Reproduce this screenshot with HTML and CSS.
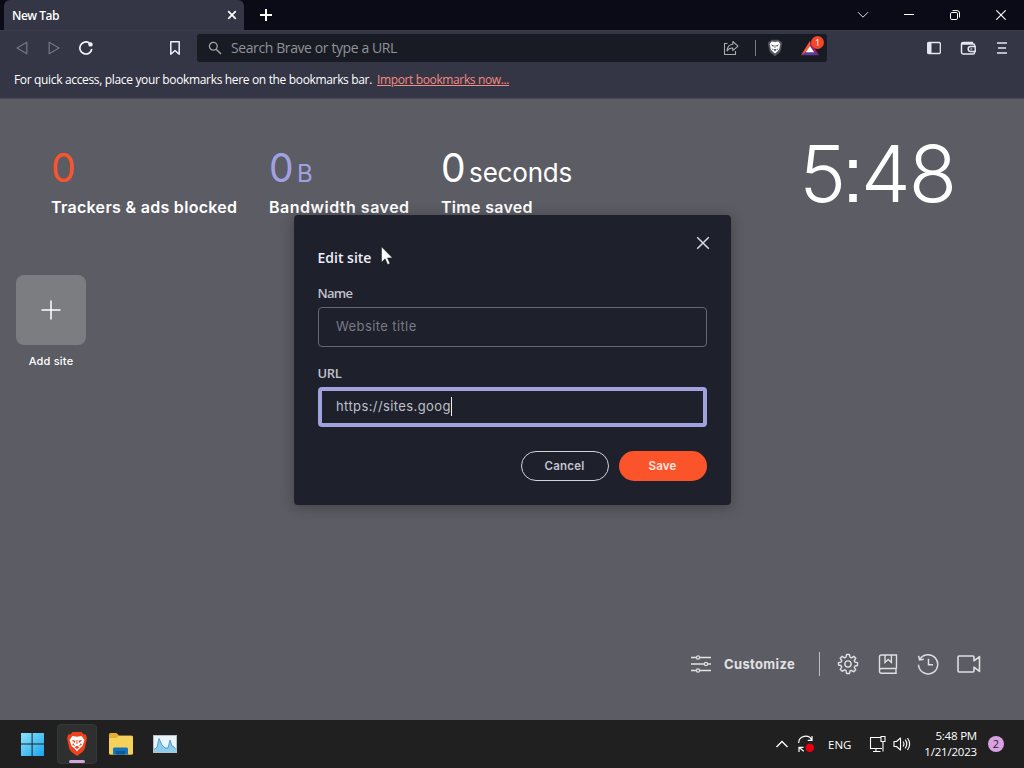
FILE: index.html
```
<!DOCTYPE html>
<html lang="en">
<head>
    <meta charset="UTF-8">
    <title>New Tab</title>
    <link rel="stylesheet" href="styles.css">
</head>
<body>
    <div class="titlebar">
        <div class="tab">
            <span>New Tab</span>
            <svg width="10" height="10" viewBox="0 0 10 10"><path d="M1.2 1.2l7.6 7.6M8.8 1.2L1.2 8.8" stroke="#fff" stroke-width="1.7"/></svg>
        </div>
        <svg class="new-tab" width="12" height="12" viewBox="0 0 12 12"><path d="M6 0v12M0 6h12" stroke="#fff" stroke-width="2"/></svg>
        <div class="window-buttons">
            <span><svg width="12" height="8" viewBox="0 0 12 8"><path d="M1 1.2l5 5 5-5" stroke="#ddd"/></svg></span>
            <span><svg width="10" height="10" viewBox="0 0 10 10"><path d="M0 4.5h10" stroke="#fff"/></svg></span>
            <span><svg width="10" height="10" viewBox="0 0 10 10"><rect x=".5" y="2.5" width="7" height="7" rx="1.3" stroke="#fff"/><path d="M2.5.6H7Q9.5.6 9.5 3v4.5" stroke="#fff"/></svg></span>
            <span><svg width="10" height="10" viewBox="0 0 10 10"><path d="M.3.3l9.4 9.4M9.7.3L.3 9.7" stroke="#fff" stroke-width="1.1"/></svg></span>
        </div>
    </div>

    <div class="toolbar">
        <div class="nav-icons">
            <svg width="16" height="16" viewBox="0 0 16 16"><path d="M12.8 2.2v11.6L3 8z" stroke="#73747f" stroke-width="1.3" stroke-linejoin="round"/></svg>
            <svg width="16" height="16" viewBox="0 0 16 16"><path d="M3.2 2.2v11.6L13 8z" stroke="#73747f" stroke-width="1.3" stroke-linejoin="round"/></svg>
            <svg width="16" height="16" viewBox="0 0 16 16"><path d="M11.5 3.2A6 6 0 1 0 13.8 9" stroke="#f3f3fa" stroke-width="1.7"/><circle cx="12.5" cy="4.4" r="2.2" fill="#f3f3fa"/></svg>
        </div>
        <svg class="bookmark" width="16" height="16" viewBox="0 0 16 16"><path d="M3.8 1.8h8.4v12.4L8 10.5l-4.2 3.7z" stroke="#eeeef5" stroke-width="1.5" stroke-linejoin="round"/></svg>
        <div class="address">
            <svg width="14" height="14" viewBox="0 0 14 14"><circle cx="5.3" cy="5.3" r="3.9" stroke="#a2a4ab" stroke-width="1.3"/><path d="M8.2 8.2l4.8 4.8" stroke="#a2a4ab" stroke-width="1.5"/></svg>
            <span class="address-text">Search Brave or type a URL</span>
            <svg class="share" width="16" height="16" viewBox="0 0 16 16"><path d="M4.5 3.5h-3v11h11v-3.5" stroke="#a9abb1" stroke-width="1.1"/><path d="M9.8 1.5l5.2 4.6-5.2 4.5V8C7.2 7.9 5.4 8.800 4 10.900c.3-4 2.500-6.400 5.800-6.700z" stroke="#a9abb1" stroke-width="1.1" stroke-linejoin="round"/></svg>
            <i class="address-sep"></i>
            <svg class="shield" width="16" height="18" viewBox="0 0 16 18"><path d="M4.4.8h7.2l1.2 1.5 1.600.2.600 2.600-1.600 7.300Q13 13.500 8 17.200 3 13.500 2.600 12.400L1 5.100l.6-2.600 1.600-.2z" fill="#555760"/><path d="M4.8 2.400l3.200.5 3.200-.5L13.200 5l-1 5.400L9.800 13 8 14.600 6.200 13l-2.400-2.600-1-5.400z" fill="#fff"/><path d="M3.800 5.400l3 .9-.6 1.700zM12.200 5.400l-3 .9.6 1.700zM6.400 10.700L8 9.700l1.600 1L8 12.200zM7.600 6h.8v3h-.8zM4.500 9l2 1.500-.8.500zM11.500 9l-2 1.500.8.500z" fill="#50525c"/></svg>
            <div class="rewards">
                <svg width="18" height="16" viewBox="0 0 18 16"><path d="M9 .8L0 15.200l4.800-2.400L9 6z" fill="#ff5537"/><path d="M9 .8l9 14.400-4.800-2.400L9 6z" fill="#9e1f63"/><path d="M0 15.200h18l-4.600-3.200H4.600z" fill="#5b3c9c"/><path d="M9 6l4.200 6.300H4.800z" fill="#fff"/></svg>
                <b>1</b>
            </div>
        </div>
        <div class="right-icons">
            <svg width="16" height="16" viewBox="0 0 16 16"><rect x="1.7" y="2.5" width="12.6" height="11" rx="1" stroke="#e6e6ee" stroke-width="1.3"/><path d="M1.5 2.500h4v11h-4z" fill="#e6e6ee"/></svg>
            <svg width="16" height="16" viewBox="0 0 16 16"><path d="M14.500 6V5q0-1-1-1h-12m0-.3v8.600Q1.500 14 3 14h10q1.500 0 1.500-1.600v-.7M1.500 4q0-1.500 1.500-1.500h9.300V4" stroke="#e6e6ee" stroke-width="1.5"/><path d="M15.200 6.600v4.800h-4.600a2.400 2.400 0 0 1 0-4.800z" stroke="#e6e6ee" stroke-width="1.5"/><path d="M10.500 9h1.700" stroke="#e6e6ee" stroke-width="1.2"/></svg>
            <svg width="16" height="16" viewBox="0 0 16 16"><path d="M3 3h10M4 8h8M3 13h10" stroke="#e6e6ee" stroke-width="1.6"/></svg>
        </div>
    </div>

    <div class="bookmarks-bar">
        <span class="hint">For quick access, place your bookmarks here on the bookmarks bar.</span>
        <a class="import">Import bookmarks now...</a>
    </div>

    <main class="page">
        <div class="top">
            <div class="stat stat-ads">
                <div class="value">0</div>
                <div class="label">Trackers &amp; ads blocked</div>
            </div>
            <div class="stat stat-data">
                <div class="value">0<small>B</small></div>
                <div class="label">Bandwidth saved</div>
            </div>
            <div class="stat stat-time">
                <div class="value">0<small>seconds</small></div>
                <div class="label">Time saved</div>
            </div>
            <div class="clock">5<span class="colon">:</span>48</div>
        </div>

        <div class="add-site">
            <div class="tile"><svg width="20" height="20" viewBox="0 0 20 20"><path d="M10 .5v19M.5 10h19" stroke="#fff" stroke-width="1.5"/></svg></div>
            <span>Add site</span>
        </div>

        <div class="footer">
            <svg class="sliders" width="20" height="18" viewBox="0 0 20 18"><path d="M0 2.500h5M9 2.500h11M0 9h13M17 9h3M0 15.500h5M9 15.500h11" stroke="#e2e2e5" stroke-width="1.3"/><circle cx="7" cy="2.5" r="1.6" stroke="#e2e2e5" stroke-width="1.2"/><circle cx="15" cy="9" r="1.6" stroke="#e2e2e5" stroke-width="1.2"/><circle cx="7" cy="15.5" r="1.6" stroke="#e2e2e5" stroke-width="1.2"/></svg>
            <span class="customize">Customize</span>
            <i class="footer-sep"></i>
            <svg width="22" height="22" viewBox="0 0 22 22"><path d="M9.500 1.500h3l.5 2.600 1.600.7 2.200-1.500 2 2-1.500 2.200.7 1.600 2.500.5v2.900l-2.500.5-.7 1.600 1.500 2.200-2 2-2.200-1.500-1.600.7-.5 2.500h-3L9 17.500l-1.600-.7-2.200 1.500-2-2 1.500-2.200-.7-1.600-2.500-.5V9.600L4 9.100l.7-1.600-1.500-2.200 2-2 2.200 1.500L9 4.100z" stroke="#dedee2" stroke-width="1.4" stroke-linejoin="round"/><circle cx="11" cy="11" r="3.100" stroke="#dedee2" stroke-width="1.4"/></svg>
            <svg width="22" height="22" viewBox="0 0 22 22"><path d="M19.500 15.500V2h-15Q2.500 2 2.500 4v14q0 2.300 2 2.300h15.300M19.500 15.500h-15q-2 0-2 2M19 15.500v4.800M8 2v7.500l3.200-3 3.200 3V2" stroke="#dedee2" stroke-width="1.4"/></svg>
            <svg width="22" height="22" viewBox="0 0 22 22"><path d="M2.800 6.500A9.600 9.600 0 1 1 1.500 11.800M1.600 2.800l1 4.200 4.200-.8M11.500 5.800v6H16" stroke="#dedee2" stroke-width="1.5"/></svg>
            <svg width="24" height="22" viewBox="0 0 24 22"><path d="M2.200 3h13.600Q17 3 17 4.200v3.600l5.500-4.200v14.800L17 14.200v3.600q0 1.200-1.200 1.200H2.200Q1 19 1 17.800V4.200Q1 3 2.200 3z" stroke="#dedee2" stroke-width="1.6" stroke-linejoin="round"/></svg>
        </div>
    </main>

    <div class="modal">
        <div class="modal-head">
            <h2>Edit site</h2>
            <svg class="modal-close" width="14" height="14" viewBox="0 0 14 14"><path d="M1.200 1.200l11.600 11.600M12.800 1.200L1.200 12.800" stroke="#d9dae3" stroke-width="1.5"/></svg>
        </div>
        <div class="form-label name-label">Name</div>
        <div class="field"><span>Website title</span></div>
        <div class="form-label">URL</div>
        <div class="field focused"><span>https://sites.goog</span><i class="caret"></i></div>
        <div class="form-buttons">
            <button class="cancel">Cancel</button>
            <button class="save">Save</button>
        </div>
    </div>

    <svg class="cursor" width="12" height="20" viewBox="0 0 12 20"><path d="M.5.8v15.400l3.600-3.400 2.500 5.700 2.400-1-2.500-5.600h5z" fill="#fff" stroke="#15161f" stroke-width=".5"/></svg>

    <div class="taskbar">
        <div class="apps">
            <svg width="24" height="24" viewBox="0 0 24 24">
                <defs><linearGradient id="win" gradientUnits="userSpaceOnUse" x1="1" y1="1" x2="23" y2="23"><stop offset="0" stop-color="#8be4fb"/><stop offset="1" stop-color="#1fa6ee"/></linearGradient></defs>
                <path d="M1 1h10.600v10.600H1zM12.600 1H24v10.600H12.600zM1 12.600h10.600V24H1zM12.600 12.600H24V24H12.600z" fill="url(#win)"/>
            </svg>
            <div class="active-app">
                <svg width="22" height="26" viewBox="0 0 22 26"><path d="M6.500 1h9l2 2.200 2.200.2L21 7l-2.200 10.500Q18 20.500 11 25 4 20.500 3.200 17.500L1 7l1.300-3.600 2.200-.2z" fill="#f0401c"/><path d="M6.500 5l4.500.8L15.500 5l3 4-2 6-3 2.500L11 20.500 8.500 17.500l-3-2.500-2-6z" fill="#fff"/><path d="M5.800 8.800l3.700 1-.8 2.200zM16.200 8.800l-3.700 1 .8 2.200zM8.500 16.200l2.500-1.500 2.500 1.500-2.500 1.700zM10.500 9h1v4h-1zM7 12l2.300 3-3-1zM15 12l-2.300 3 3-1z" fill="#ee421e"/></svg>
            </div>
            <svg class="folder" width="24" height="24" viewBox="0 0 24 24"><path d="M0 2.500Q0 1 1.500 1h6L10 3.500h12.500Q24 3.500 24 5v16q0 1.500-1.500 1.500h-21Q0 22.500 0 21z" fill="#e9ad32"/><path d="M0 6h7.500l2-2h13q1.500 0 1.500 1.500v15.500q0 1.500-1.500 1.500h-21Q0 22.500 0 21z" fill="#f5d05a"/><path d="M4 22.500V17q0-1.500 1.500-1.500h12q1.500 0 1.500 1.500v5.500z" fill="#1374bd"/><path d="M7 19h9v3.500H7z" fill="#0b5997"/></svg>
            <svg width="24" height="20" viewBox="0 0 24 20"><path d="M0 1h24v18H0z" fill="#b9c1c8"/><path d="M1 2h22v16H1z" fill="#e9f4fb"/><path d="M1 16l3-2 2-9 3 6 3 3 3 0 2-7 2 5 2 1 2 3v2H1z" fill="#8fcbea"/><path d="M1 15.500l3-2 2-9 3 6.500 3 3h3l2-8 2 6 2 1 2 2.500" stroke="#2b8dc4" stroke-width=".8"/></svg>
        </div>
        <div class="tray">
            <svg width="12" height="8" viewBox="0 0 12 8"><path d="M.5 7L6 1.500 11.500 7" stroke="#fff" stroke-width="1.3"/></svg>
            <svg class="sync" width="18" height="18" viewBox="0 0 18 18"><path d="M1.600 8A7 7 0 0 1 14.800 5M15 1v4.300h-4.300M2 17v-4.700h4.500M2.200 12.500l4.500 3.800" stroke="#fff" stroke-width="1.2"/><circle cx="12.800" cy="12.800" r="4.300" fill="#e8000d"/></svg>
            <span class="lang">ENG</span>
            <svg class="net" width="18" height="18" viewBox="0 0 18 18"><path d="M11.500 2.500H1.500v11h11.500M4 16.500h7.500M7 13.500v3M12 1.500h4v5h-4zM14 6.500v10" stroke="#fff" stroke-width="1.1"/></svg>
            <svg class="sound" width="18" height="16" viewBox="0 0 18 16"><path d="M1 5.500h2.500L7.500 2v12l-4-3.500H1zM10 5.500q2 2.500 0 5M12.200 3.700q3.200 4.300 0 8.600M14.500 2q4.300 6 0 12" stroke="#fff" stroke-width="1.1" stroke-linejoin="round"/></svg>
            <div class="datetime"><div>5:48 PM</div><div class="date">1/21/2023</div></div>
            <span class="count">2</span>
        </div>
    </div>
</body>
</html>
```
FILE: styles.css
```
* { box-sizing: border-box; }
body { margin: 0; width: 1024px; height: 768px; overflow: hidden; display: flex; flex-direction: column; position: relative; font-family: "Open Sans", "Noto Sans", sans-serif; color: #fff; background: #5c5c64; }
svg { display: block; fill: none; flex: none; }
span, .label, .value, .date { white-space: nowrap; }

/* browser window */
.titlebar { height: 30px; flex: none; display: flex; align-items: center; background: #0b0b17; padding-left: 4px; }
.tab { width: 240px; height: 30px; display: flex; align-items: center; justify-content: space-between; padding: 0 7px 0 8px; background: #343545; border-radius: 6px 6px 0 0; font-size: 12px; font-weight: 600; letter-spacing: -0.5px; }
.new-tab { margin-left: 16px; }
.window-buttons { margin-left: auto; display: flex; }
.window-buttons span { width: 46px; height: 28px; display: flex; align-items: center; justify-content: center; }

.toolbar { height: 36px; flex: none; display: flex; align-items: center; padding: 0 14px 1px; background: #343545; border-top: 1px solid #3c3c49; }
.nav-icons { display: flex; gap: 16px; }
.bookmark { margin-left: 73px; }
.address { width: 630px; height: 28px; margin-left: 14px; padding: 0 6px 0 11px; display: flex; align-items: center; background: #191b24; border-radius: 3px; }
.address-text { margin-left: 9px; padding-bottom: 2px; font-size: 14px; letter-spacing: -0.4px; color: #8f9298; }
.share { margin-left: auto; }
.address-sep { width: 1px; height: 16px; margin-left: 16px; background: #777983; }
.shield { margin-left: 11px; }
.rewards { position: relative; margin-left: 18px; width: 20px; }
.rewards b { position: absolute; left: 10px; top: -4px; width: 13px; height: 13px; border-radius: 50%; background: #f4472a; font-size: 9px; line-height: 13px; text-align: center; font-weight: 400; }
.right-icons { margin-left: auto; display: flex; gap: 18px; }

.bookmarks-bar { height: 33px; flex: none; display: flex; align-items: center; padding: 0 14px 5px; background: #343545; border-bottom: 1px solid #4a4955; font-size: 12px; }
.hint { letter-spacing: -0.34px; }
.import { margin-left: 5px; color: #f58a83; text-decoration: underline; letter-spacing: -0.37px; }

/* new tab page */
.page { flex: 1; display: flex; flex-direction: column; font-family: Inter, "Open Sans", sans-serif; background: #5c5c64; }
.top { display: flex; height: 176px; padding: 47px 69px 0 51px; }
.stat { flex: none; }
.stat-ads { width: 218px; }
.stat-data { width: 172px; }
.value { height: 44px; font-size: 39px; line-height: 44px; letter-spacing: -0.5px; }
.value small { margin-left: 4px; font-size: 24px; }
.stat-time small { font-size: 26px; letter-spacing: -0.2px; }
.label { margin-top: 6px; line-height: 22px; font-size: 16px; font-weight: 600; letter-spacing: 0.3px; }
.stat-data .label { letter-spacing: 0.5px; }
.stat-ads .value { color: #fb542b; }
.stat-data .value { color: #a0a1e2; }
.clock { margin-left: auto; margin-top: -21px; height: 96px; line-height: 96px; font-size: 79px; font-weight: 300; letter-spacing: -2px; }
.colon { margin: 0 -1px 0 -2px; font-family: "Liberation Sans", sans-serif; }

.add-site { width: 70px; margin-left: 16px; display: flex; flex-direction: column; align-items: center; font-size: 11px; font-weight: 500; }
.tile { width: 70px; height: 70px; display: flex; align-items: center; justify-content: center; border-radius: 8px; background: #7c7d80; }
.add-site span { margin-top: 9px; letter-spacing: 0.2px; }

.footer { margin-top: auto; height: 112px; padding: 0 43px 0 0; display: flex; align-items: center; justify-content: flex-end; gap: 18px; color: #e2e2e5; }
.sliders { margin-right: -5px; }
.customize { font-size: 13px; font-weight: 700; width: 71px; letter-spacing: 0.35px; }
.footer-sep { width: 1px; height: 24px; margin: 0 -1px 0 6px; background: #bdbdc2; }

/* edit site dialog */
.modal { position: absolute; left: 294px; top: 215px; width: 437px; height: 290px; padding: 20px 24px 24px; display: flex; flex-direction: column; background: #1e202b; border-radius: 4px; box-shadow: 0 2px 14px rgba(0, 0, 0, 0.3); }
.modal-head { display: flex; justify-content: space-between; height: 44px; }
.modal-head h2 { margin: 12px 0 0 -0.5px; font-size: 14px; line-height: 22px; font-weight: 600; color: #edeef8; }
.modal-close { margin: 1px -2.500px 0 0; }
.form-label { height: 28px; line-height: 29px; margin-left: -0.5px; font-size: 13px; font-weight: 600; letter-spacing: -0.3px; color: #c0c1cc; }
.name-label { letter-spacing: -0.7px; }
.field { height: 40px; flex: none; margin-bottom: 12px; padding: 0 17px 2px; display: flex; align-items: center; border: 1px solid #666875; border-radius: 4px; font: 13px Inter, sans-serif; letter-spacing: 0.4px; color: #797b87; }
.field.focused { padding: 0 14px 2px; border: 4px solid #a0a1dd; color: #bfc0ca; }
.caret { width: 1px; height: 19px; background: #eee; }
.form-buttons { display: flex; justify-content: flex-end; gap: 10px; margin-top: 12px; }
.form-buttons button { width: 88px; height: 30px; padding: 0 1px 1px 0; border-radius: 15px; font: 600 11.5px Inter, sans-serif; letter-spacing: 0.2px; }
.form-buttons .cancel { background: none; border: 1px solid #d0d1da; color: #c4c5d0; }
.form-buttons .save { background: #fb542b; border: 0; color: #ffe9e2; }
.cursor { position: absolute; left: 381px; top: 246px; }

/* taskbar */
.taskbar { height: 48px; flex: none; display: flex; align-items: center; justify-content: space-between; background: #202020; padding: 0 20px; }
.apps { display: flex; align-items: center; }
.active-app { position: relative; width: 40px; height: 40px; margin: 0 12px 0 13px; display: flex; align-items: center; justify-content: center; background: #2e2f2f; border-radius: 4px; border: 1px solid #363737; }
.active-app::after { content: ""; position: absolute; left: 11px; bottom: 0; width: 16px; height: 3px; border-radius: 2px; background: #d2a6dc; }
.folder { margin-right: 20px; }
.tray { display: flex; align-items: center; font-size: 11.5px; }
.sync { margin-left: 9px; }
.lang { margin-left: 13px; width: 25px; }
.net { margin-left: 16px; }
.sound { margin-left: 6px; }
.datetime { width: 66px; text-align: right; line-height: 16px; letter-spacing: -0.2px; }
.count { width: 16px; height: 16px; margin-left: 11px; border-radius: 50%; background: #d9a0e2; color: #2b1b2f; font-size: 11px; line-height: 16px; text-align: center; }
```
